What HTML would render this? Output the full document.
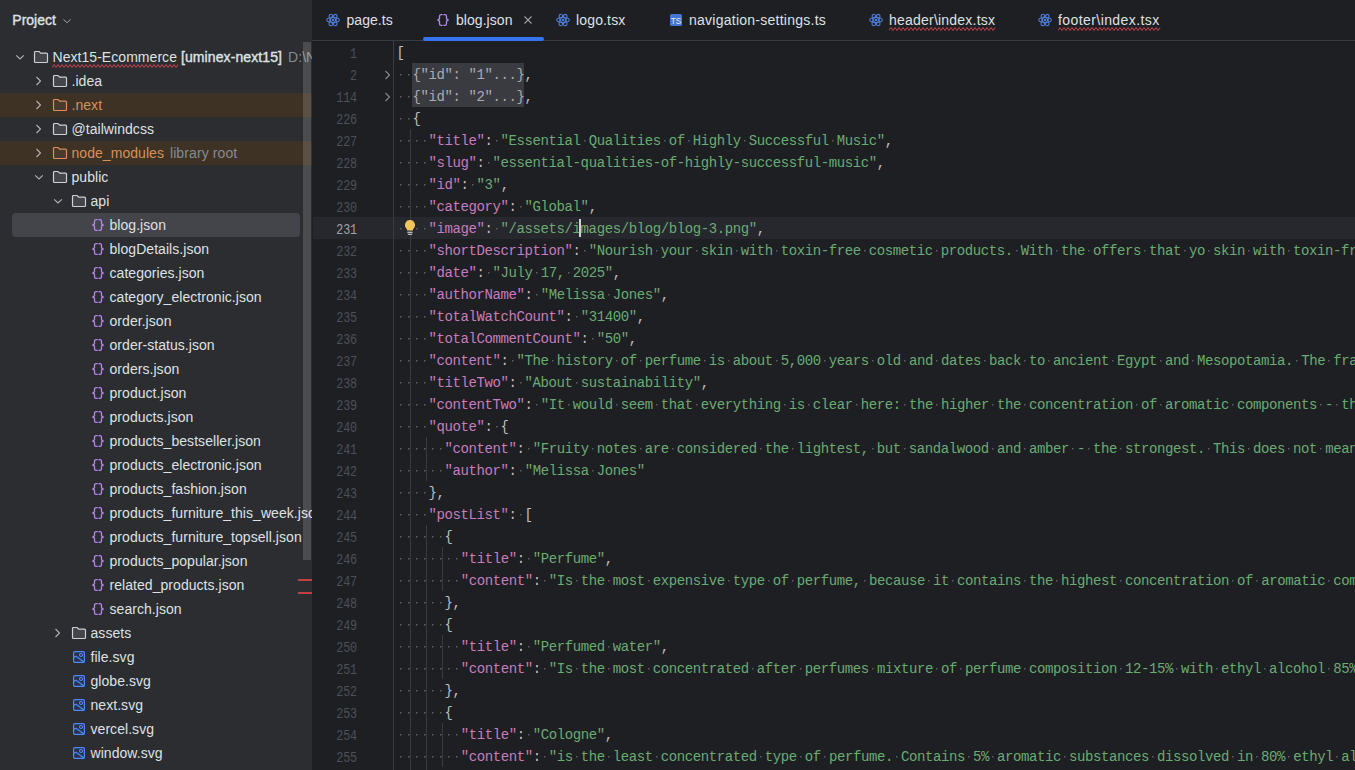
<!DOCTYPE html><html><head><meta charset="utf-8"><style>
*{margin:0;padding:0;box-sizing:border-box}
html,body{width:1355px;height:770px;overflow:hidden;background:#1E1F22}
body{position:relative;font-family:"Liberation Sans",sans-serif}
.ic{position:absolute;display:block}
#proj{position:absolute;left:0;top:0;width:312px;height:770px;background:#2B2D30;overflow:hidden}
.ptitle{position:absolute;left:12.3px;top:11px;font-size:14px;font-weight:normal;-webkit-text-stroke:0.35px #DFE1E5;color:#DFE1E5;line-height:18px;letter-spacing:0px}
.tr{position:absolute;height:24px;line-height:24px;font-size:14px;color:#DFE1E5;white-space:nowrap;letter-spacing:0.05px}
.tr b{font-weight:normal;-webkit-text-stroke:0.4px #DFE1E5;font-size:14px;margin-left:0px;letter-spacing:0.1px}
.tr.ex{color:#D5915D}
.gr{color:#868A91}
.tr .gr{color:#868A91}
.exbg{position:absolute;left:0;width:312px;height:24px;background:#3E3224}
.sel{position:absolute;left:12px;width:288px;height:24px;background:#43454A;border-radius:4px}
.sq{text-decoration:underline wavy #E55765;text-decoration-thickness:1px;text-underline-offset:3px}
#pscroll{position:absolute;left:303px;top:42px;width:8px;height:518px;background:rgba(255,255,255,0.15);border-radius:0}
.redm{position:absolute;left:298px;width:14px;height:2px;background:#C23F44}
#ed{position:absolute;left:312px;top:0;width:1043px;height:770px}
#tabs{position:absolute;left:0;top:0;width:1043px;height:41px;border-bottom:1px solid #393B40}
.tab{position:absolute;top:11px;font-size:14px;line-height:18px;color:#DFE1E5;white-space:nowrap;letter-spacing:0.05px}
#tabul{position:absolute;left:111px;top:37px;width:121px;height:4px;background:#3574F0;border-radius:2px}
#code{position:absolute;left:312px;top:41px;width:1043px;height:729px;overflow:hidden;font-family:"Liberation Mono",monospace}
#curl{position:absolute;left:1px;width:1042px;height:22px;background:#26282E}
.guide{position:absolute;width:1px;background:#393B40}
.foldbox{position:absolute;width:112px;background:#393B40}
.ln{position:absolute;left:0;width:45px;text-align:right;height:22px;line-height:22px;font-size:14px;letter-spacing:-0.2px;color:#4B5059;padding-top:2px;transform:scaleX(0.84);transform-origin:44.8px 0}
.ln.cur{color:#A1A3AB}
.cl{position:absolute;left:84.5px;height:22px;line-height:22px;font-size:14px;letter-spacing:-0.4px;white-space:pre;padding-top:1px;color:#BCBEC4}
.cl i{font-style:normal;background:linear-gradient(#5C5F65,#5C5F65) no-repeat;background-size:1.5px 1.5px;background-position:3.3px 7.3px}
.k{color:#C77DBB}.s{color:#6AAB73}.p{color:#BCBEC4}
.fd{color:#A9ABB0}
#caret{position:absolute;left:267px;top:178px;width:2px;height:18px;background:#CED0D6}
</style></head><body><div id="proj"><div class="ptitle">Project</div><svg class="ic" style="left:59px;top:13px" width="16" height="16" viewBox="0 0 16 16"><path d="M4.5 6.3 L8 9.8 L11.5 6.3" fill="none" stroke="#A8ABB0" stroke-width="1"/></svg><div class="exbg" style="top:93px"></div><div class="exbg" style="top:141px"></div><div class="sel" style="top:213px"></div><svg class="ic" style="left:11px;top:49px" width="16" height="16" viewBox="0 0 16 16"><path d="M5.2 6.3 L9 10 L12.8 6.3" fill="none" stroke="#B0B3B8" stroke-width="1.1"/></svg><svg class="ic" style="left:33px;top:49px" width="16" height="16" viewBox="0 0 16 16"><path d="M1.5 3.5 a1 1 0 0 1 1-1 h3.6 l1.6 1.6 h5.8 a1 1 0 0 1 1 1 v7.4 a1 1 0 0 1-1 1 h-11 a1 1 0 0 1-1-1z" fill="#43454A" stroke="#CED0D6" stroke-width="1.2"/></svg><div class="tr" style="left:52.5px;top:45px">Next15-Ecommerce <b>[uminex-next15]</b><span class="gr" style="margin-left:6px">D:\Next15-Ecommerce</span></div><svg class="ic" style="left:52px;top:63.5px" width="128" height="5" viewBox="0 0 128 5"><polyline points="0,3 2,0 4,3 6,0 8,3 10,0 12,3 14,0 16,3 18,0 20,3 22,0 24,3 26,0 28,3 30,0 32,3 34,0 36,3 38,0 40,3 42,0 44,3 46,0 48,3 50,0 52,3 54,0 56,3 58,0 60,3 62,0 64,3 66,0 68,3 70,0 72,3 74,0 76,3 78,0 80,3 82,0 84,3 86,0 88,3 90,0 92,3 94,0 96,3 98,0 100,3 102,0 104,3 106,0 108,3 110,0 112,3 114,0 116,3 118,0 120,3 122,0 124,3 126,0" transform="translate(0,0.5)" fill="none" stroke="#C9434F" stroke-width="1"/></svg><svg class="ic" style="left:30px;top:73px" width="16" height="16" viewBox="0 0 16 16"><path d="M6.5 4 L10.5 8 L6.5 12" fill="none" stroke="#B0B3B8" stroke-width="1.1"/></svg><svg class="ic" style="left:52px;top:73px" width="16" height="16" viewBox="0 0 16 16"><path d="M1.5 3.5 a1 1 0 0 1 1-1 h3.6 l1.6 1.6 h5.8 a1 1 0 0 1 1 1 v7.4 a1 1 0 0 1-1 1 h-11 a1 1 0 0 1-1-1z" fill="#43454A" stroke="#CED0D6" stroke-width="1.2"/></svg><div class="tr" style="left:71.5px;top:69px">.idea</div><svg class="ic" style="left:30px;top:97px" width="16" height="16" viewBox="0 0 16 16"><path d="M6.5 4 L10.5 8 L6.5 12" fill="none" stroke="#B0B3B8" stroke-width="1.1"/></svg><svg class="ic" style="left:52px;top:97px" width="16" height="16" viewBox="0 0 16 16"><path d="M1.5 3.5 a1 1 0 0 1 1-1 h3.6 l1.6 1.6 h5.8 a1 1 0 0 1 1 1 v7.4 a1 1 0 0 1-1 1 h-11 a1 1 0 0 1-1-1z" fill="#4A3A2E" stroke="#D98E5C" stroke-width="1.2"/></svg><div class="tr ex" style="left:71.5px;top:93px">.next</div><svg class="ic" style="left:30px;top:121px" width="16" height="16" viewBox="0 0 16 16"><path d="M6.5 4 L10.5 8 L6.5 12" fill="none" stroke="#B0B3B8" stroke-width="1.1"/></svg><svg class="ic" style="left:52px;top:121px" width="16" height="16" viewBox="0 0 16 16"><path d="M1.5 3.5 a1 1 0 0 1 1-1 h3.6 l1.6 1.6 h5.8 a1 1 0 0 1 1 1 v7.4 a1 1 0 0 1-1 1 h-11 a1 1 0 0 1-1-1z" fill="#43454A" stroke="#CED0D6" stroke-width="1.2"/></svg><div class="tr" style="left:71.5px;top:117px">@tailwindcss</div><svg class="ic" style="left:30px;top:145px" width="16" height="16" viewBox="0 0 16 16"><path d="M6.5 4 L10.5 8 L6.5 12" fill="none" stroke="#B0B3B8" stroke-width="1.1"/></svg><svg class="ic" style="left:52px;top:145px" width="16" height="16" viewBox="0 0 16 16"><path d="M1.5 3.5 a1 1 0 0 1 1-1 h3.6 l1.6 1.6 h5.8 a1 1 0 0 1 1 1 v7.4 a1 1 0 0 1-1 1 h-11 a1 1 0 0 1-1-1z" fill="#4A3A2E" stroke="#D98E5C" stroke-width="1.2"/></svg><div class="tr ex" style="left:71.5px;top:141px">node_modules<span class="gr" style="margin-left:6px;letter-spacing:0.1px">library root</span></div><svg class="ic" style="left:30px;top:169px" width="16" height="16" viewBox="0 0 16 16"><path d="M5.2 6.3 L9 10 L12.8 6.3" fill="none" stroke="#B0B3B8" stroke-width="1.1"/></svg><svg class="ic" style="left:52px;top:169px" width="16" height="16" viewBox="0 0 16 16"><path d="M1.5 3.5 a1 1 0 0 1 1-1 h3.6 l1.6 1.6 h5.8 a1 1 0 0 1 1 1 v7.4 a1 1 0 0 1-1 1 h-11 a1 1 0 0 1-1-1z" fill="#43454A" stroke="#CED0D6" stroke-width="1.2"/></svg><div class="tr" style="left:71.5px;top:165px">public</div><svg class="ic" style="left:49px;top:193px" width="16" height="16" viewBox="0 0 16 16"><path d="M5.2 6.3 L9 10 L12.8 6.3" fill="none" stroke="#B0B3B8" stroke-width="1.1"/></svg><svg class="ic" style="left:71px;top:193px" width="16" height="16" viewBox="0 0 16 16"><path d="M1.5 3.5 a1 1 0 0 1 1-1 h3.6 l1.6 1.6 h5.8 a1 1 0 0 1 1 1 v7.4 a1 1 0 0 1-1 1 h-11 a1 1 0 0 1-1-1z" fill="#43454A" stroke="#CED0D6" stroke-width="1.2"/></svg><div class="tr" style="left:90.5px;top:189px">api</div><svg class="ic" style="left:90px;top:217px" width="16" height="16" viewBox="0 0 16 16"><path d="M7.6 2.7 H6.1 Q4.5 2.7 4.5 4.3 V6.9 L2.7 8 L4.5 9.1 V11.7 Q4.5 13.3 6.1 13.3 H7.6 M8.4 2.7 H9.9 Q11.5 2.7 11.5 4.3 V6.9 L13.3 8 L11.5 9.1 V11.7 Q11.5 13.3 9.9 13.3 H8.4" fill="none" stroke="#B589EC" stroke-width="1.3" stroke-linejoin="round"/></svg><div class="tr" style="left:109.5px;top:213px">blog.json</div><svg class="ic" style="left:90px;top:241px" width="16" height="16" viewBox="0 0 16 16"><path d="M7.6 2.7 H6.1 Q4.5 2.7 4.5 4.3 V6.9 L2.7 8 L4.5 9.1 V11.7 Q4.5 13.3 6.1 13.3 H7.6 M8.4 2.7 H9.9 Q11.5 2.7 11.5 4.3 V6.9 L13.3 8 L11.5 9.1 V11.7 Q11.5 13.3 9.9 13.3 H8.4" fill="none" stroke="#B589EC" stroke-width="1.3" stroke-linejoin="round"/></svg><div class="tr" style="left:109.5px;top:237px">blogDetails.json</div><svg class="ic" style="left:90px;top:265px" width="16" height="16" viewBox="0 0 16 16"><path d="M7.6 2.7 H6.1 Q4.5 2.7 4.5 4.3 V6.9 L2.7 8 L4.5 9.1 V11.7 Q4.5 13.3 6.1 13.3 H7.6 M8.4 2.7 H9.9 Q11.5 2.7 11.5 4.3 V6.9 L13.3 8 L11.5 9.1 V11.7 Q11.5 13.3 9.9 13.3 H8.4" fill="none" stroke="#B589EC" stroke-width="1.3" stroke-linejoin="round"/></svg><div class="tr" style="left:109.5px;top:261px">categories.json</div><svg class="ic" style="left:90px;top:289px" width="16" height="16" viewBox="0 0 16 16"><path d="M7.6 2.7 H6.1 Q4.5 2.7 4.5 4.3 V6.9 L2.7 8 L4.5 9.1 V11.7 Q4.5 13.3 6.1 13.3 H7.6 M8.4 2.7 H9.9 Q11.5 2.7 11.5 4.3 V6.9 L13.3 8 L11.5 9.1 V11.7 Q11.5 13.3 9.9 13.3 H8.4" fill="none" stroke="#B589EC" stroke-width="1.3" stroke-linejoin="round"/></svg><div class="tr" style="left:109.5px;top:285px">category_electronic.json</div><svg class="ic" style="left:90px;top:313px" width="16" height="16" viewBox="0 0 16 16"><path d="M7.6 2.7 H6.1 Q4.5 2.7 4.5 4.3 V6.9 L2.7 8 L4.5 9.1 V11.7 Q4.5 13.3 6.1 13.3 H7.6 M8.4 2.7 H9.9 Q11.5 2.7 11.5 4.3 V6.9 L13.3 8 L11.5 9.1 V11.7 Q11.5 13.3 9.9 13.3 H8.4" fill="none" stroke="#B589EC" stroke-width="1.3" stroke-linejoin="round"/></svg><div class="tr" style="left:109.5px;top:309px">order.json</div><svg class="ic" style="left:90px;top:337px" width="16" height="16" viewBox="0 0 16 16"><path d="M7.6 2.7 H6.1 Q4.5 2.7 4.5 4.3 V6.9 L2.7 8 L4.5 9.1 V11.7 Q4.5 13.3 6.1 13.3 H7.6 M8.4 2.7 H9.9 Q11.5 2.7 11.5 4.3 V6.9 L13.3 8 L11.5 9.1 V11.7 Q11.5 13.3 9.9 13.3 H8.4" fill="none" stroke="#B589EC" stroke-width="1.3" stroke-linejoin="round"/></svg><div class="tr" style="left:109.5px;top:333px">order-status.json</div><svg class="ic" style="left:90px;top:361px" width="16" height="16" viewBox="0 0 16 16"><path d="M7.6 2.7 H6.1 Q4.5 2.7 4.5 4.3 V6.9 L2.7 8 L4.5 9.1 V11.7 Q4.5 13.3 6.1 13.3 H7.6 M8.4 2.7 H9.9 Q11.5 2.7 11.5 4.3 V6.9 L13.3 8 L11.5 9.1 V11.7 Q11.5 13.3 9.9 13.3 H8.4" fill="none" stroke="#B589EC" stroke-width="1.3" stroke-linejoin="round"/></svg><div class="tr" style="left:109.5px;top:357px">orders.json</div><svg class="ic" style="left:90px;top:385px" width="16" height="16" viewBox="0 0 16 16"><path d="M7.6 2.7 H6.1 Q4.5 2.7 4.5 4.3 V6.9 L2.7 8 L4.5 9.1 V11.7 Q4.5 13.3 6.1 13.3 H7.6 M8.4 2.7 H9.9 Q11.5 2.7 11.5 4.3 V6.9 L13.3 8 L11.5 9.1 V11.7 Q11.5 13.3 9.9 13.3 H8.4" fill="none" stroke="#B589EC" stroke-width="1.3" stroke-linejoin="round"/></svg><div class="tr" style="left:109.5px;top:381px">product.json</div><svg class="ic" style="left:90px;top:409px" width="16" height="16" viewBox="0 0 16 16"><path d="M7.6 2.7 H6.1 Q4.5 2.7 4.5 4.3 V6.9 L2.7 8 L4.5 9.1 V11.7 Q4.5 13.3 6.1 13.3 H7.6 M8.4 2.7 H9.9 Q11.5 2.7 11.5 4.3 V6.9 L13.3 8 L11.5 9.1 V11.7 Q11.5 13.3 9.9 13.3 H8.4" fill="none" stroke="#B589EC" stroke-width="1.3" stroke-linejoin="round"/></svg><div class="tr" style="left:109.5px;top:405px">products.json</div><svg class="ic" style="left:90px;top:433px" width="16" height="16" viewBox="0 0 16 16"><path d="M7.6 2.7 H6.1 Q4.5 2.7 4.5 4.3 V6.9 L2.7 8 L4.5 9.1 V11.7 Q4.5 13.3 6.1 13.3 H7.6 M8.4 2.7 H9.9 Q11.5 2.7 11.5 4.3 V6.9 L13.3 8 L11.5 9.1 V11.7 Q11.5 13.3 9.9 13.3 H8.4" fill="none" stroke="#B589EC" stroke-width="1.3" stroke-linejoin="round"/></svg><div class="tr" style="left:109.5px;top:429px">products_bestseller.json</div><svg class="ic" style="left:90px;top:457px" width="16" height="16" viewBox="0 0 16 16"><path d="M7.6 2.7 H6.1 Q4.5 2.7 4.5 4.3 V6.9 L2.7 8 L4.5 9.1 V11.7 Q4.5 13.3 6.1 13.3 H7.6 M8.4 2.7 H9.9 Q11.5 2.7 11.5 4.3 V6.9 L13.3 8 L11.5 9.1 V11.7 Q11.5 13.3 9.9 13.3 H8.4" fill="none" stroke="#B589EC" stroke-width="1.3" stroke-linejoin="round"/></svg><div class="tr" style="left:109.5px;top:453px">products_electronic.json</div><svg class="ic" style="left:90px;top:481px" width="16" height="16" viewBox="0 0 16 16"><path d="M7.6 2.7 H6.1 Q4.5 2.7 4.5 4.3 V6.9 L2.7 8 L4.5 9.1 V11.7 Q4.5 13.3 6.1 13.3 H7.6 M8.4 2.7 H9.9 Q11.5 2.7 11.5 4.3 V6.9 L13.3 8 L11.5 9.1 V11.7 Q11.5 13.3 9.9 13.3 H8.4" fill="none" stroke="#B589EC" stroke-width="1.3" stroke-linejoin="round"/></svg><div class="tr" style="left:109.5px;top:477px">products_fashion.json</div><svg class="ic" style="left:90px;top:505px" width="16" height="16" viewBox="0 0 16 16"><path d="M7.6 2.7 H6.1 Q4.5 2.7 4.5 4.3 V6.9 L2.7 8 L4.5 9.1 V11.7 Q4.5 13.3 6.1 13.3 H7.6 M8.4 2.7 H9.9 Q11.5 2.7 11.5 4.3 V6.9 L13.3 8 L11.5 9.1 V11.7 Q11.5 13.3 9.9 13.3 H8.4" fill="none" stroke="#B589EC" stroke-width="1.3" stroke-linejoin="round"/></svg><div class="tr" style="left:109.5px;top:501px">products_furniture_this_week.json</div><svg class="ic" style="left:90px;top:529px" width="16" height="16" viewBox="0 0 16 16"><path d="M7.6 2.7 H6.1 Q4.5 2.7 4.5 4.3 V6.9 L2.7 8 L4.5 9.1 V11.7 Q4.5 13.3 6.1 13.3 H7.6 M8.4 2.7 H9.9 Q11.5 2.7 11.5 4.3 V6.9 L13.3 8 L11.5 9.1 V11.7 Q11.5 13.3 9.9 13.3 H8.4" fill="none" stroke="#B589EC" stroke-width="1.3" stroke-linejoin="round"/></svg><div class="tr" style="left:109.5px;top:525px">products_furniture_topsell.json</div><svg class="ic" style="left:90px;top:553px" width="16" height="16" viewBox="0 0 16 16"><path d="M7.6 2.7 H6.1 Q4.5 2.7 4.5 4.3 V6.9 L2.7 8 L4.5 9.1 V11.7 Q4.5 13.3 6.1 13.3 H7.6 M8.4 2.7 H9.9 Q11.5 2.7 11.5 4.3 V6.9 L13.3 8 L11.5 9.1 V11.7 Q11.5 13.3 9.9 13.3 H8.4" fill="none" stroke="#B589EC" stroke-width="1.3" stroke-linejoin="round"/></svg><div class="tr" style="left:109.5px;top:549px">products_popular.json</div><svg class="ic" style="left:90px;top:577px" width="16" height="16" viewBox="0 0 16 16"><path d="M7.6 2.7 H6.1 Q4.5 2.7 4.5 4.3 V6.9 L2.7 8 L4.5 9.1 V11.7 Q4.5 13.3 6.1 13.3 H7.6 M8.4 2.7 H9.9 Q11.5 2.7 11.5 4.3 V6.9 L13.3 8 L11.5 9.1 V11.7 Q11.5 13.3 9.9 13.3 H8.4" fill="none" stroke="#B589EC" stroke-width="1.3" stroke-linejoin="round"/></svg><div class="tr" style="left:109.5px;top:573px">related_products.json</div><svg class="ic" style="left:90px;top:601px" width="16" height="16" viewBox="0 0 16 16"><path d="M7.6 2.7 H6.1 Q4.5 2.7 4.5 4.3 V6.9 L2.7 8 L4.5 9.1 V11.7 Q4.5 13.3 6.1 13.3 H7.6 M8.4 2.7 H9.9 Q11.5 2.7 11.5 4.3 V6.9 L13.3 8 L11.5 9.1 V11.7 Q11.5 13.3 9.9 13.3 H8.4" fill="none" stroke="#B589EC" stroke-width="1.3" stroke-linejoin="round"/></svg><div class="tr" style="left:109.5px;top:597px">search.json</div><svg class="ic" style="left:49px;top:625px" width="16" height="16" viewBox="0 0 16 16"><path d="M6.5 4 L10.5 8 L6.5 12" fill="none" stroke="#B0B3B8" stroke-width="1.1"/></svg><svg class="ic" style="left:71px;top:625px" width="16" height="16" viewBox="0 0 16 16"><path d="M1.5 3.5 a1 1 0 0 1 1-1 h3.6 l1.6 1.6 h5.8 a1 1 0 0 1 1 1 v7.4 a1 1 0 0 1-1 1 h-11 a1 1 0 0 1-1-1z" fill="#43454A" stroke="#CED0D6" stroke-width="1.2"/></svg><div class="tr" style="left:90.5px;top:621px">assets</div><svg class="ic" style="left:71px;top:649px" width="16" height="16" viewBox="0 0 16 16"><rect x="2.6" y="2.6" width="10.8" height="10.8" rx="1.2" fill="#26324A" stroke="#548AF7" stroke-width="1.2"/><path d="M2.8 8.6 L4.9 7.2 L13 13.1" fill="none" stroke="#548AF7" stroke-width="1.2"/><circle cx="10" cy="6" r="1.5" fill="none" stroke="#548AF7" stroke-width="1.1"/></svg><div class="tr" style="left:90.5px;top:645px">file.svg</div><svg class="ic" style="left:71px;top:673px" width="16" height="16" viewBox="0 0 16 16"><rect x="2.6" y="2.6" width="10.8" height="10.8" rx="1.2" fill="#26324A" stroke="#548AF7" stroke-width="1.2"/><path d="M2.8 8.6 L4.9 7.2 L13 13.1" fill="none" stroke="#548AF7" stroke-width="1.2"/><circle cx="10" cy="6" r="1.5" fill="none" stroke="#548AF7" stroke-width="1.1"/></svg><div class="tr" style="left:90.5px;top:669px">globe.svg</div><svg class="ic" style="left:71px;top:697px" width="16" height="16" viewBox="0 0 16 16"><rect x="2.6" y="2.6" width="10.8" height="10.8" rx="1.2" fill="#26324A" stroke="#548AF7" stroke-width="1.2"/><path d="M2.8 8.6 L4.9 7.2 L13 13.1" fill="none" stroke="#548AF7" stroke-width="1.2"/><circle cx="10" cy="6" r="1.5" fill="none" stroke="#548AF7" stroke-width="1.1"/></svg><div class="tr" style="left:90.5px;top:693px">next.svg</div><svg class="ic" style="left:71px;top:721px" width="16" height="16" viewBox="0 0 16 16"><rect x="2.6" y="2.6" width="10.8" height="10.8" rx="1.2" fill="#26324A" stroke="#548AF7" stroke-width="1.2"/><path d="M2.8 8.6 L4.9 7.2 L13 13.1" fill="none" stroke="#548AF7" stroke-width="1.2"/><circle cx="10" cy="6" r="1.5" fill="none" stroke="#548AF7" stroke-width="1.1"/></svg><div class="tr" style="left:90.5px;top:717px">vercel.svg</div><svg class="ic" style="left:71px;top:745px" width="16" height="16" viewBox="0 0 16 16"><rect x="2.6" y="2.6" width="10.8" height="10.8" rx="1.2" fill="#26324A" stroke="#548AF7" stroke-width="1.2"/><path d="M2.8 8.6 L4.9 7.2 L13 13.1" fill="none" stroke="#548AF7" stroke-width="1.2"/><circle cx="10" cy="6" r="1.5" fill="none" stroke="#548AF7" stroke-width="1.1"/></svg><div class="tr" style="left:90.5px;top:741px">window.svg</div><div id="pscroll"></div><div class="redm" style="top:579px"></div><div class="redm" style="top:592px"></div></div><div id="ed"><div id="tabs"><svg class="ic" style="left:13px;top:12px" width="16" height="16" viewBox="0 0 16 16"><g fill="none" stroke="#4F7FDA" stroke-width="1.1"><ellipse cx="8" cy="8" rx="6.3" ry="2.5"/><ellipse cx="8" cy="8" rx="6.3" ry="2.5" transform="rotate(60 8 8)"/><ellipse cx="8" cy="8" rx="6.3" ry="2.5" transform="rotate(120 8 8)"/></g><circle cx="8" cy="8" r="1.3" fill="#4F7FDA"/></svg><div class="tab" style="left:34.5px">page.ts</div><div class="tabfade" style="left:70px"></div><svg class="ic" style="left:123px;top:12px" width="16" height="16" viewBox="0 0 16 16"><path d="M7.6 2.7 H6.1 Q4.5 2.7 4.5 4.3 V6.9 L2.7 8 L4.5 9.1 V11.7 Q4.5 13.3 6.1 13.3 H7.6 M8.4 2.7 H9.9 Q11.5 2.7 11.5 4.3 V6.9 L13.3 8 L11.5 9.1 V11.7 Q11.5 13.3 9.9 13.3 H8.4" fill="none" stroke="#B589EC" stroke-width="1.3" stroke-linejoin="round"/></svg><div class="tab act" style="left:144px">blog.json</div><svg class="ic" style="left:208px;top:12px" width="16" height="16" viewBox="0 0 16 16"><path d="M4.5 4.5 L11.5 11.5 M11.5 4.5 L4.5 11.5" stroke="#9DA0A8" stroke-width="1.1"/></svg><div id="tabul"></div><svg class="ic" style="left:243px;top:12px" width="16" height="16" viewBox="0 0 16 16"><g fill="none" stroke="#4F7FDA" stroke-width="1.1"><ellipse cx="8" cy="8" rx="6.3" ry="2.5"/><ellipse cx="8" cy="8" rx="6.3" ry="2.5" transform="rotate(60 8 8)"/><ellipse cx="8" cy="8" rx="6.3" ry="2.5" transform="rotate(120 8 8)"/></g><circle cx="8" cy="8" r="1.3" fill="#4F7FDA"/></svg><div class="tab" style="left:264px;letter-spacing:0.15px">logo.tsx</div><svg class="ic" style="left:356px;top:12px" width="16" height="16" viewBox="0 0 16 16"><rect x="2" y="2" width="12" height="12" rx="1.5" fill="#4675D3"/><text x="8" y="12.1" text-anchor="middle" font-family="Liberation Sans" font-size="8.4" fill="#E6E8EE">TS</text></svg><div class="tab" style="left:377px;letter-spacing:0.25px">navigation-settings.ts</div><svg class="ic" style="left:556px;top:12px" width="16" height="16" viewBox="0 0 16 16"><g fill="none" stroke="#4F7FDA" stroke-width="1.1"><ellipse cx="8" cy="8" rx="6.3" ry="2.5"/><ellipse cx="8" cy="8" rx="6.3" ry="2.5" transform="rotate(60 8 8)"/><ellipse cx="8" cy="8" rx="6.3" ry="2.5" transform="rotate(120 8 8)"/></g><circle cx="8" cy="8" r="1.3" fill="#4F7FDA"/></svg><div class="tab" style="left:577px;letter-spacing:0.22px">header\index.tsx</div><svg class="ic" style="left:577px;top:26.5px" width="108" height="5" viewBox="0 0 108 5"><polyline points="0,3 2,0 4,3 6,0 8,3 10,0 12,3 14,0 16,3 18,0 20,3 22,0 24,3 26,0 28,3 30,0 32,3 34,0 36,3 38,0 40,3 42,0 44,3 46,0 48,3 50,0 52,3 54,0 56,3 58,0 60,3 62,0 64,3 66,0 68,3 70,0 72,3 74,0 76,3 78,0 80,3 82,0 84,3 86,0 88,3 90,0 92,3 94,0 96,3 98,0 100,3 102,0 104,3 106,0" transform="translate(0,0.5)" fill="none" stroke="#C9434F" stroke-width="1"/></svg><svg class="ic" style="left:725px;top:12px" width="16" height="16" viewBox="0 0 16 16"><g fill="none" stroke="#4F7FDA" stroke-width="1.1"><ellipse cx="8" cy="8" rx="6.3" ry="2.5"/><ellipse cx="8" cy="8" rx="6.3" ry="2.5" transform="rotate(60 8 8)"/><ellipse cx="8" cy="8" rx="6.3" ry="2.5" transform="rotate(120 8 8)"/></g><circle cx="8" cy="8" r="1.3" fill="#4F7FDA"/></svg><div class="tab" style="left:746px;letter-spacing:0.42px">footer\index.tsx</div><svg class="ic" style="left:746px;top:26.5px" width="104" height="5" viewBox="0 0 104 5"><polyline points="0,3 2,0 4,3 6,0 8,3 10,0 12,3 14,0 16,3 18,0 20,3 22,0 24,3 26,0 28,3 30,0 32,3 34,0 36,3 38,0 40,3 42,0 44,3 46,0 48,3 50,0 52,3 54,0 56,3 58,0 60,3 62,0 64,3 66,0 68,3 70,0 72,3 74,0 76,3 78,0 80,3 82,0 84,3 86,0 88,3 90,0 92,3 94,0 96,3 98,0 100,3 102,0" transform="translate(0,0.5)" fill="none" stroke="#C9434F" stroke-width="1"/></svg></div></div><div id="code"><div id="curl" style="top:176px"></div><div class="guide" style="left:81px;top:0px;height:748px"></div><div class="guide" style="left:98px;top:88px;height:660px"></div><div class="guide" style="left:114px;top:396px;height:44px"></div><div class="guide" style="left:114px;top:484px;height:264px"></div><div class="guide" style="left:130px;top:506px;height:44px"></div><div class="guide" style="left:130px;top:594px;height:44px"></div><div class="guide" style="left:130px;top:682px;height:44px"></div><div class="foldbox" style="left:100px;top:22px;height:44px"></div><div class="ln" style="top:0px">1</div><div class="cl" style="top:0px"><span class="p">[</span></div><div class="ln" style="top:22px">2</div><svg class="ic" style="left:66.5px;top:25.5px" width="16" height="16" viewBox="0 0 16 16"><path d="M6.5 4 L10.5 8 L6.5 12" fill="none" stroke="#878B91" stroke-width="1.1"/></svg><div class="cl" style="top:22px"><span class="w"><i> </i><i> </i></span><span class="fd">{"id": "1"...}</span><span class="p">,</span></div><div class="ln" style="top:44px">114</div><svg class="ic" style="left:66.5px;top:47.5px" width="16" height="16" viewBox="0 0 16 16"><path d="M6.5 4 L10.5 8 L6.5 12" fill="none" stroke="#878B91" stroke-width="1.1"/></svg><div class="cl" style="top:44px"><span class="w"><i> </i><i> </i></span><span class="fd">{"id": "2"...}</span><span class="p">,</span></div><div class="ln" style="top:66px">226</div><div class="cl" style="top:66px"><span class="w"><i> </i><i> </i></span><span class="p">{</span></div><div class="ln" style="top:88px">227</div><div class="cl" style="top:88px"><span class="w"><i> </i><i> </i><i> </i><i> </i></span><span class="k">&quot;title&quot;</span><span class="p">:</span><span class="w"><i> </i></span><span class="s">&quot;Essential<i> </i>Qualities<i> </i>of<i> </i>Highly<i> </i>Successful<i> </i>Music&quot;</span><span class="p">,</span></div><div class="ln" style="top:110px">228</div><div class="cl" style="top:110px"><span class="w"><i> </i><i> </i><i> </i><i> </i></span><span class="k">&quot;slug&quot;</span><span class="p">:</span><span class="w"><i> </i></span><span class="s">&quot;essential-qualities-of-highly-successful-music&quot;</span><span class="p">,</span></div><div class="ln" style="top:132px">229</div><div class="cl" style="top:132px"><span class="w"><i> </i><i> </i><i> </i><i> </i></span><span class="k">&quot;id&quot;</span><span class="p">:</span><span class="w"><i> </i></span><span class="s">&quot;3&quot;</span><span class="p">,</span></div><div class="ln" style="top:154px">230</div><div class="cl" style="top:154px"><span class="w"><i> </i><i> </i><i> </i><i> </i></span><span class="k">&quot;category&quot;</span><span class="p">:</span><span class="w"><i> </i></span><span class="s">&quot;Global&quot;</span><span class="p">,</span></div><div class="ln cur" style="top:176px">231</div><div class="cl" style="top:176px"><span class="w"><i> </i><i> </i><i> </i><i> </i></span><span class="k">&quot;image&quot;</span><span class="p">:</span><span class="w"><i> </i></span><span class="s">&quot;/assets/images/blog/blog-3.png&quot;</span><span class="p">,</span></div><div class="ln" style="top:198px">232</div><div class="cl" style="top:198px"><span class="w"><i> </i><i> </i><i> </i><i> </i></span><span class="k">&quot;shortDescription&quot;</span><span class="p">:</span><span class="w"><i> </i></span><span class="s">&quot;Nourish<i> </i>your<i> </i>skin<i> </i>with<i> </i>toxin-free<i> </i>cosmetic<i> </i>products.<i> </i>With<i> </i>the<i> </i>offers<i> </i>that<i> </i>yo<i> </i>skin<i> </i>with<i> </i>toxin-free<i> </i>cosmetic&quot;</span></div><div class="ln" style="top:220px">233</div><div class="cl" style="top:220px"><span class="w"><i> </i><i> </i><i> </i><i> </i></span><span class="k">&quot;date&quot;</span><span class="p">:</span><span class="w"><i> </i></span><span class="s">&quot;July<i> </i>17,<i> </i>2025&quot;</span><span class="p">,</span></div><div class="ln" style="top:242px">234</div><div class="cl" style="top:242px"><span class="w"><i> </i><i> </i><i> </i><i> </i></span><span class="k">&quot;authorName&quot;</span><span class="p">:</span><span class="w"><i> </i></span><span class="s">&quot;Melissa<i> </i>Jones&quot;</span><span class="p">,</span></div><div class="ln" style="top:264px">235</div><div class="cl" style="top:264px"><span class="w"><i> </i><i> </i><i> </i><i> </i></span><span class="k">&quot;totalWatchCount&quot;</span><span class="p">:</span><span class="w"><i> </i></span><span class="s">&quot;31400&quot;</span><span class="p">,</span></div><div class="ln" style="top:286px">236</div><div class="cl" style="top:286px"><span class="w"><i> </i><i> </i><i> </i><i> </i></span><span class="k">&quot;totalCommentCount&quot;</span><span class="p">:</span><span class="w"><i> </i></span><span class="s">&quot;50&quot;</span><span class="p">,</span></div><div class="ln" style="top:308px">237</div><div class="cl" style="top:308px"><span class="w"><i> </i><i> </i><i> </i><i> </i></span><span class="k">&quot;content&quot;</span><span class="p">:</span><span class="w"><i> </i></span><span class="s">&quot;The<i> </i>history<i> </i>of<i> </i>perfume<i> </i>is<i> </i>about<i> </i>5,000<i> </i>years<i> </i>old<i> </i>and<i> </i>dates<i> </i>back<i> </i>to<i> </i>ancient<i> </i>Egypt<i> </i>and<i> </i>Mesopotamia.<i> </i>The<i> </i>fragrance&quot;</span></div><div class="ln" style="top:330px">238</div><div class="cl" style="top:330px"><span class="w"><i> </i><i> </i><i> </i><i> </i></span><span class="k">&quot;titleTwo&quot;</span><span class="p">:</span><span class="w"><i> </i></span><span class="s">&quot;About<i> </i>sustainability&quot;</span><span class="p">,</span></div><div class="ln" style="top:352px">239</div><div class="cl" style="top:352px"><span class="w"><i> </i><i> </i><i> </i><i> </i></span><span class="k">&quot;contentTwo&quot;</span><span class="p">:</span><span class="w"><i> </i></span><span class="s">&quot;It<i> </i>would<i> </i>seem<i> </i>that<i> </i>everything<i> </i>is<i> </i>clear<i> </i>here:<i> </i>the<i> </i>higher<i> </i>the<i> </i>concentration<i> </i>of<i> </i>aromatic<i> </i>components<i> </i>-<i> </i>the<i> </i>more&quot;</span></div><div class="ln" style="top:374px">240</div><div class="cl" style="top:374px"><span class="w"><i> </i><i> </i><i> </i><i> </i></span><span class="k">&quot;quote&quot;</span><span class="p">:</span><span class="w"><i> </i></span><span class="p">{</span></div><div class="ln" style="top:396px">241</div><div class="cl" style="top:396px"><span class="w"><i> </i><i> </i><i> </i><i> </i><i> </i><i> </i></span><span class="k">&quot;content&quot;</span><span class="p">:</span><span class="w"><i> </i></span><span class="s">&quot;Fruity<i> </i>notes<i> </i>are<i> </i>considered<i> </i>the<i> </i>lightest,<i> </i>but<i> </i>sandalwood<i> </i>and<i> </i>amber<i> </i>-<i> </i>the<i> </i>strongest.<i> </i>This<i> </i>does<i> </i>not<i> </i>mean<i> </i>that&quot;</span></div><div class="ln" style="top:418px">242</div><div class="cl" style="top:418px"><span class="w"><i> </i><i> </i><i> </i><i> </i><i> </i><i> </i></span><span class="k">&quot;author&quot;</span><span class="p">:</span><span class="w"><i> </i></span><span class="s">&quot;Melissa<i> </i>Jones&quot;</span></div><div class="ln" style="top:440px">243</div><div class="cl" style="top:440px"><span class="w"><i> </i><i> </i><i> </i><i> </i></span><span class="p">},</span></div><div class="ln" style="top:462px">244</div><div class="cl" style="top:462px"><span class="w"><i> </i><i> </i><i> </i><i> </i></span><span class="k">&quot;postList&quot;</span><span class="p">:</span><span class="w"><i> </i></span><span class="p">[</span></div><div class="ln" style="top:484px">245</div><div class="cl" style="top:484px"><span class="w"><i> </i><i> </i><i> </i><i> </i><i> </i><i> </i></span><span class="p">{</span></div><div class="ln" style="top:506px">246</div><div class="cl" style="top:506px"><span class="w"><i> </i><i> </i><i> </i><i> </i><i> </i><i> </i><i> </i><i> </i></span><span class="k">&quot;title&quot;</span><span class="p">:</span><span class="w"><i> </i></span><span class="s">&quot;Perfume&quot;</span><span class="p">,</span></div><div class="ln" style="top:528px">247</div><div class="cl" style="top:528px"><span class="w"><i> </i><i> </i><i> </i><i> </i><i> </i><i> </i><i> </i><i> </i></span><span class="k">&quot;content&quot;</span><span class="p">:</span><span class="w"><i> </i></span><span class="s">&quot;Is<i> </i>the<i> </i>most<i> </i>expensive<i> </i>type<i> </i>of<i> </i>perfume,<i> </i>because<i> </i>it<i> </i>contains<i> </i>the<i> </i>highest<i> </i>concentration<i> </i>of<i> </i>aromatic<i> </i>components&quot;</span></div><div class="ln" style="top:550px">248</div><div class="cl" style="top:550px"><span class="w"><i> </i><i> </i><i> </i><i> </i><i> </i><i> </i></span><span class="p">},</span></div><div class="ln" style="top:572px">249</div><div class="cl" style="top:572px"><span class="w"><i> </i><i> </i><i> </i><i> </i><i> </i><i> </i></span><span class="p">{</span></div><div class="ln" style="top:594px">250</div><div class="cl" style="top:594px"><span class="w"><i> </i><i> </i><i> </i><i> </i><i> </i><i> </i><i> </i><i> </i></span><span class="k">&quot;title&quot;</span><span class="p">:</span><span class="w"><i> </i></span><span class="s">&quot;Perfumed<i> </i>water&quot;</span><span class="p">,</span></div><div class="ln" style="top:616px">251</div><div class="cl" style="top:616px"><span class="w"><i> </i><i> </i><i> </i><i> </i><i> </i><i> </i><i> </i><i> </i></span><span class="k">&quot;content&quot;</span><span class="p">:</span><span class="w"><i> </i></span><span class="s">&quot;Is<i> </i>the<i> </i>most<i> </i>concentrated<i> </i>after<i> </i>perfumes<i> </i>mixture<i> </i>of<i> </i>perfume<i> </i>composition<i> </i>12-15%<i> </i>with<i> </i>ethyl<i> </i>alcohol<i> </i>85%<i> </i>and&quot;</span></div><div class="ln" style="top:638px">252</div><div class="cl" style="top:638px"><span class="w"><i> </i><i> </i><i> </i><i> </i><i> </i><i> </i></span><span class="p">},</span></div><div class="ln" style="top:660px">253</div><div class="cl" style="top:660px"><span class="w"><i> </i><i> </i><i> </i><i> </i><i> </i><i> </i></span><span class="p">{</span></div><div class="ln" style="top:682px">254</div><div class="cl" style="top:682px"><span class="w"><i> </i><i> </i><i> </i><i> </i><i> </i><i> </i><i> </i><i> </i></span><span class="k">&quot;title&quot;</span><span class="p">:</span><span class="w"><i> </i></span><span class="s">&quot;Cologne&quot;</span><span class="p">,</span></div><div class="ln" style="top:704px">255</div><div class="cl" style="top:704px"><span class="w"><i> </i><i> </i><i> </i><i> </i><i> </i><i> </i><i> </i><i> </i></span><span class="k">&quot;content&quot;</span><span class="p">:</span><span class="w"><i> </i></span><span class="s">&quot;is<i> </i>the<i> </i>least<i> </i>concentrated<i> </i>type<i> </i>of<i> </i>perfume.<i> </i>Contains<i> </i>5%<i> </i>aromatic<i> </i>substances<i> </i>dissolved<i> </i>in<i> </i>80%<i> </i>ethyl<i> </i>alcohol<i> </i>and&quot;</span></div><div class="ln" style="top:726px">256</div><div class="cl" style="top:726px"><span class="w"><i> </i><i> </i><i> </i><i> </i><i> </i><i> </i></span><span class="p">}</span></div><svg class="ic" style="left:90px;top:178px" width="16" height="16" viewBox="0 0 16 16"><path d="M8 1 A5.1 5.1 0 0 1 11.3 9.9 L10.7 11.4 H5.3 L4.7 9.9 A5.1 5.1 0 0 1 8 1 Z" fill="#F2C55C"/><path d="M5.3 13.2 h5.4 M5.8 15.3 h4.4" stroke="#DFE1E5" stroke-width="1.1"/></svg><div id="caret"></div></div></body></html>
